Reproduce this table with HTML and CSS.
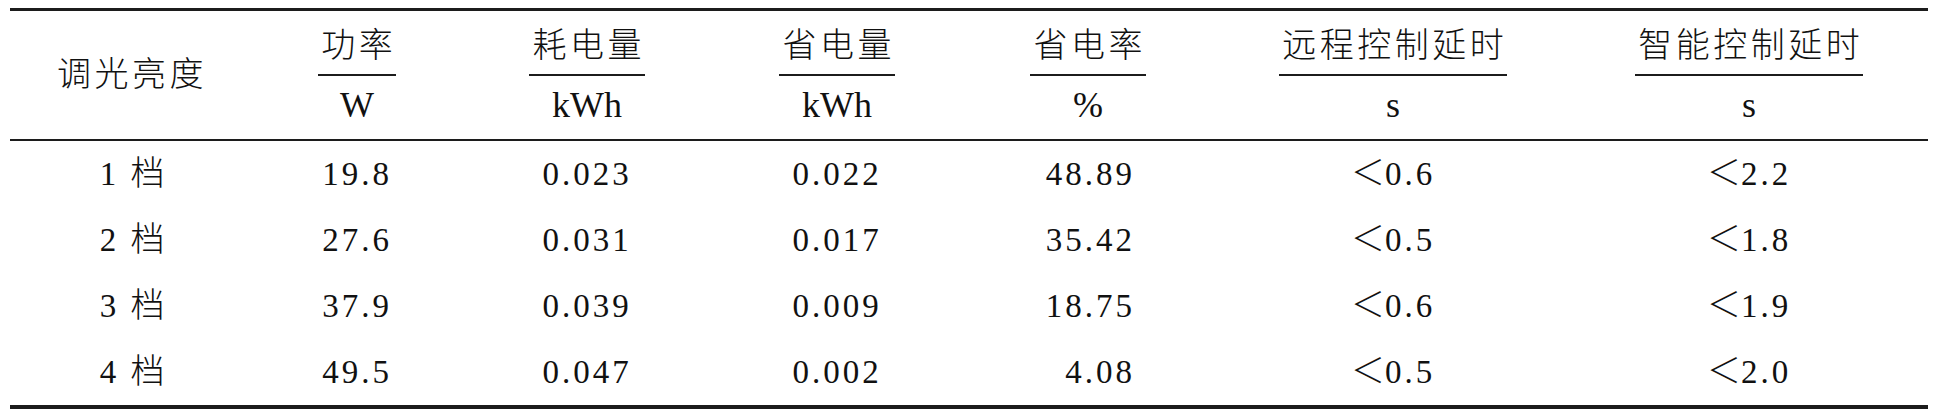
FILE: index.html
```html
<!DOCTYPE html>
<html lang="zh-CN">
<head>
  <meta charset="UTF-8">
  <meta name="viewport" content="width=device-width, initial-scale=1.0">
  <title>调光亮度测试</title>
  <link rel="stylesheet" href="styles.css">
</head>
<body>

  <table class="data-table">
    <colgroup>
      <col class="col-level">
      <col class="col-power">
      <col class="col-use">
      <col class="col-save">
      <col class="col-rate">
      <col class="col-remote">
      <col class="col-smart">
    </colgroup>
    <thead>
      <tr>
        <th class="head-level">调光亮度</th>
        <th><div class="name">功率</div><div class="unit">W</div></th>
        <th><div class="name">耗电量</div><div class="unit">kWh</div></th>
        <th><div class="name">省电量</div><div class="unit">kWh</div></th>
        <th><div class="name">省电率</div><div class="unit">%</div></th>
        <th><div class="name">远程控制延时</div><div class="unit">s</div></th>
        <th><div class="name">智能控制延时</div><div class="unit">s</div></th>
      </tr>
    </thead>
    <tbody>
      <tr>
        <td>1 <span class="cjk">档</span></td>
        <td>19.8</td>
        <td>0.023</td>
        <td>0.022</td>
        <td class="rate">48.89</td>
        <td><span class="cjk">＜</span>0.6</td>
        <td><span class="cjk">＜</span>2.2</td>
      </tr>
      <tr>
        <td>2 <span class="cjk">档</span></td>
        <td>27.6</td>
        <td>0.031</td>
        <td>0.017</td>
        <td class="rate">35.42</td>
        <td><span class="cjk">＜</span>0.5</td>
        <td><span class="cjk">＜</span>1.8</td>
      </tr>
      <tr>
        <td>3 <span class="cjk">档</span></td>
        <td>37.9</td>
        <td>0.039</td>
        <td>0.009</td>
        <td class="rate">18.75</td>
        <td><span class="cjk">＜</span>0.6</td>
        <td><span class="cjk">＜</span>1.9</td>
      </tr>
      <tr>
        <td>4 <span class="cjk">档</span></td>
        <td>49.5</td>
        <td>0.047</td>
        <td>0.002</td>
        <td class="rate">4.08</td>
        <td><span class="cjk">＜</span>0.5</td>
        <td><span class="cjk">＜</span>2.0</td>
      </tr>
    </tbody>
  </table>

</body>
</html>
```

FILE: styles.css
```css
body {
  margin: 8px 8px 8px 10px;
  background-color: white;
  color: #111;
  font-family: "Liberation Serif", "DejaVu Serif", serif;
}

.data-table {
  width: 1918px;
  table-layout: fixed;
  border-collapse: separate;
  border-spacing: 0;
  border-top: 3px solid #1c1c1c;
  border-bottom: 4px solid #1c1c1c;
}

.col-level { width: 244px; }
.col-power { width: 206px; }
.col-use { width: 254px; }
.col-save { width: 246px; }
.col-rate { width: 256px; }
.col-remote { width: 354px; }
.col-smart { width: 358px; }

th {
  padding: 12px 0 14px;
  border-bottom: 2px solid #1c1c1c;
  font-weight: normal;
  text-align: center;
  vertical-align: top;
}

.name {
  display: inline-block;
  padding-bottom: 11px;
  border-bottom: 2px solid #1c1c1c;
  font-family: "Noto Sans CJK SC", sans-serif;
  font-size: 34px;
  font-weight: 300;
  line-height: 40px;
  letter-spacing: 3.5px;
  text-indent: 3.5px;
}

.unit {
  margin-top: 9px;
  font-size: 36px;
  line-height: 40px;
}

.head-level {
  padding: 0 0 6px;
  vertical-align: middle;
  font-family: "Noto Sans CJK SC", sans-serif;
  font-size: 34px;
  font-weight: 300;
  line-height: 40px;
  letter-spacing: 3.5px;
}

td {
  height: 66px;
  padding: 0;
  font-size: 33px;
  line-height: 66px;
  letter-spacing: 3px;
  text-align: center;
}

.cjk {
  font-family: "Noto Sans CJK SC", sans-serif;
  font-size: 34px;
  font-weight: 300;
  line-height: 1;
  letter-spacing: 0;
}

td.rate {
  padding-right: 81px;
  text-align: right;
}
```
